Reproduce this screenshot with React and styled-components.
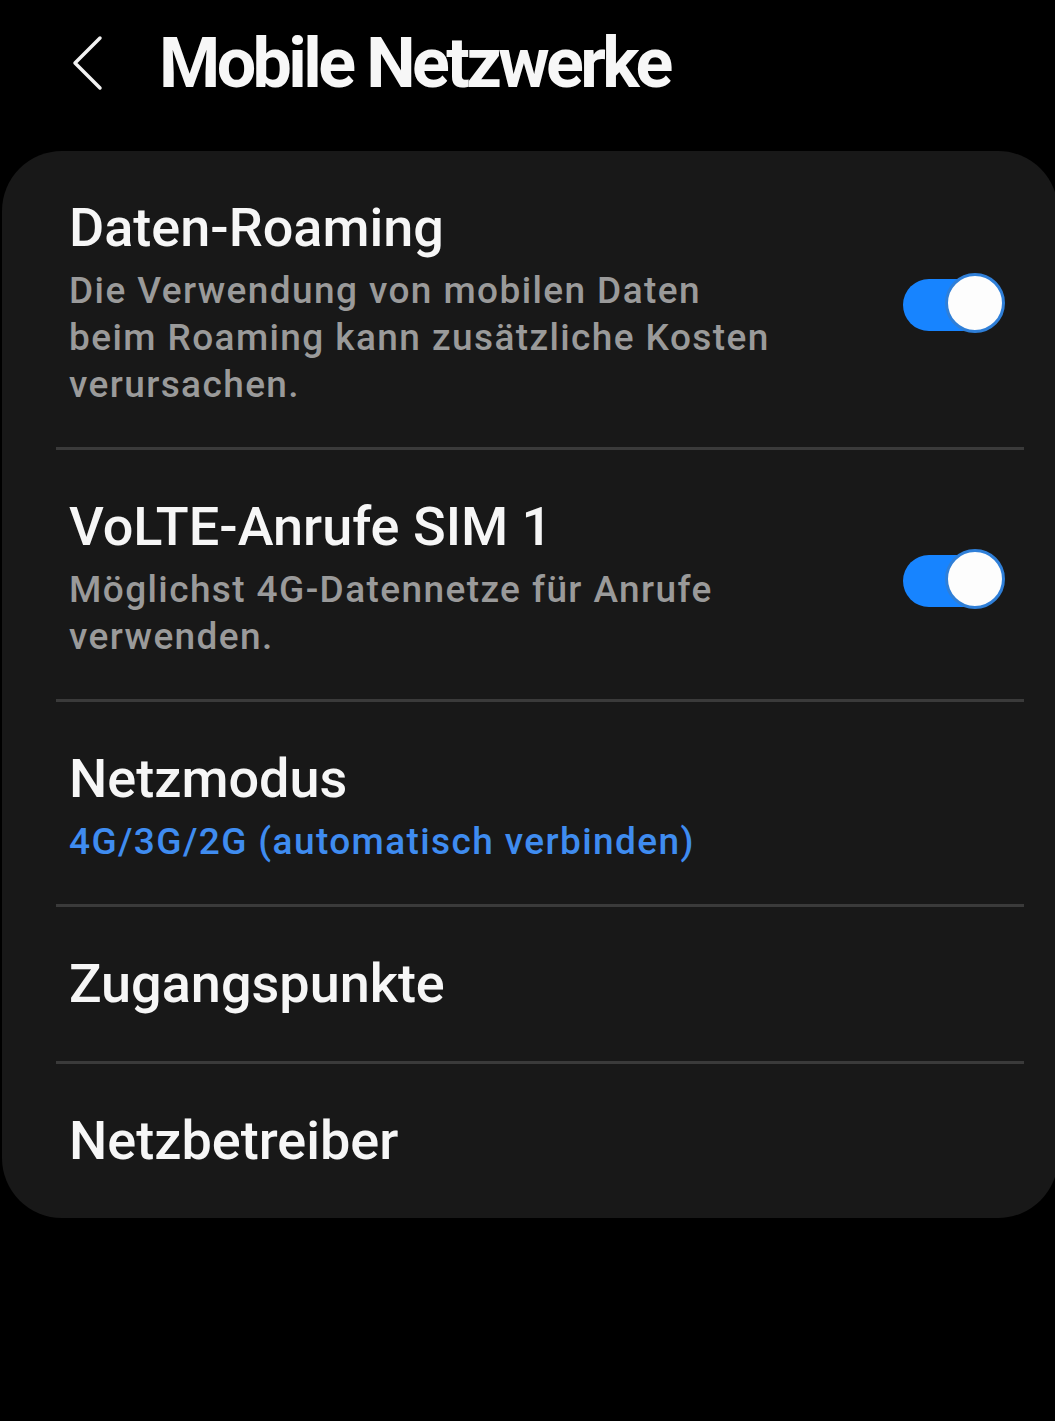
import React from "react";
import styled, { createGlobalStyle } from "styled-components";

const Global = createGlobalStyle`
  html, body { margin: 0; padding: 0; background: #000; overflow: hidden; }
  body { font-family: Roboto, "Noto Sans", "Liberation Sans", sans-serif; -webkit-font-smoothing: antialiased; }
  #root { min-height: 1421px; background: #000; }
`;

const Page = styled.div`
  width: 1055px;
  min-height: 1421px;
  background: #000;
`;

const Header = styled.header`
  height: 151px;
  box-sizing: border-box;
  display: flex;
  align-items: flex-start;
  padding: 28px 0 0 70px;
`;

const BackButton = styled.button`
  width: 36px;
  height: 70px;
  padding: 0;
  margin: 0 53px 0 0;
  border: none;
  background: transparent;
  display: flex;
  align-items: center;
  justify-content: center;
  color: #f2f2f2;
`;

const Title = styled.h1`
  margin: 0;
  font-size: 70px;
  line-height: 70px;
  font-weight: 700;
  letter-spacing: -3.6px;
  color: #f7f7f7;
`;

const Card = styled.section`
  margin-left: 2px;
  width: 1056px;
  background: #181818;
  border-radius: 60px;
  overflow: hidden;
`;

const Row = styled.div`
  display: flex;
  align-items: center;
  padding: ${(p) => (p.$single ? "47px 0 47px 67px" : "47px 0 39px 67px")};
`;

const TextCol = styled.div`
  flex: 1;
  max-width: 790px;
  display: flex;
  flex-direction: column;
  gap: 9px;
`;

const RowTitle = styled.div`
  font-size: 54px;
  line-height: 60px;
  font-weight: 500;
  color: #f6f6f6;
`;

const RowSub = styled.div`
  font-size: 37px;
  line-height: 47px;
  font-weight: 500;
  letter-spacing: 1.4px;
  color: ${(p) => (p.$accent ? "#3f8cf0" : "#9a9a9a")};
`;

const Divider = styled.div`
  height: 3px;
  background: #3a3a3a;
  margin: 0 34px 0 54px;
`;

const SwitchWrap = styled.div`
  margin-left: auto;
  margin-right: 53px;
  position: relative;
  width: 102px;
  height: 60px;
  flex-shrink: 0;
`;

const Track = styled.div`
  position: absolute;
  left: 0;
  top: 6px;
  width: 97px;
  height: 52px;
  border-radius: 26px;
  background: #1784ff;
`;

const Thumb = styled.div`
  position: absolute;
  right: 0;
  top: 0;
  width: 54px;
  height: 54px;
  border-radius: 50%;
  background: #fdfdfd;
  border: 3px solid #2f7fd8;
`;

const Switch = () => (
  <SwitchWrap>
    <Track />
    <Thumb />
  </SwitchWrap>
);

const items = [
  {
    title: "Daten-Roaming",
    sub: ["Die Verwendung von mobilen Daten", "beim Roaming kann zusätzliche Kosten", "verursachen."],
    toggle: true,
  },
  {
    title: "VoLTE-Anrufe SIM 1",
    sub: ["Möglichst 4G-Datennetze für Anrufe", "verwenden."],
    toggle: true,
  },
  {
    title: "Netzmodus",
    sub: ["4G/3G/2G (automatisch verbinden)"],
    accent: true,
  },
  { title: "Zugangspunkte" },
  { title: "Netzbetreiber" },
];

export default function App() {
  return (
    <Page>
      <Global />
      <Header>
        <BackButton aria-label="Zurück">
          <svg width="36" height="56" viewBox="0 0 36 56" fill="none">
            <polyline
              points="30,3 5,28 30,53"
              stroke="#f2f2f2"
              strokeWidth="3.5"
              strokeLinecap="round"
              strokeLinejoin="round"
            />
          </svg>
        </BackButton>
        <Title>Mobile Netzwerke</Title>
      </Header>
      <Card>
        {items.map((it, i) => (
          <React.Fragment key={it.title}>
            {i > 0 && <Divider />}
            <Row $single={!it.sub}>
              <TextCol>
                <RowTitle>{it.title}</RowTitle>
                {it.sub && (
                  <RowSub $accent={it.accent}>
                    {it.sub.map((line, j) => (
                      <React.Fragment key={j}>
                        {j > 0 && <br />}
                        {line}
                      </React.Fragment>
                    ))}
                  </RowSub>
                )}
              </TextCol>
              {it.toggle && <Switch />}
            </Row>
          </React.Fragment>
        ))}
      </Card>
    </Page>
  );
}
